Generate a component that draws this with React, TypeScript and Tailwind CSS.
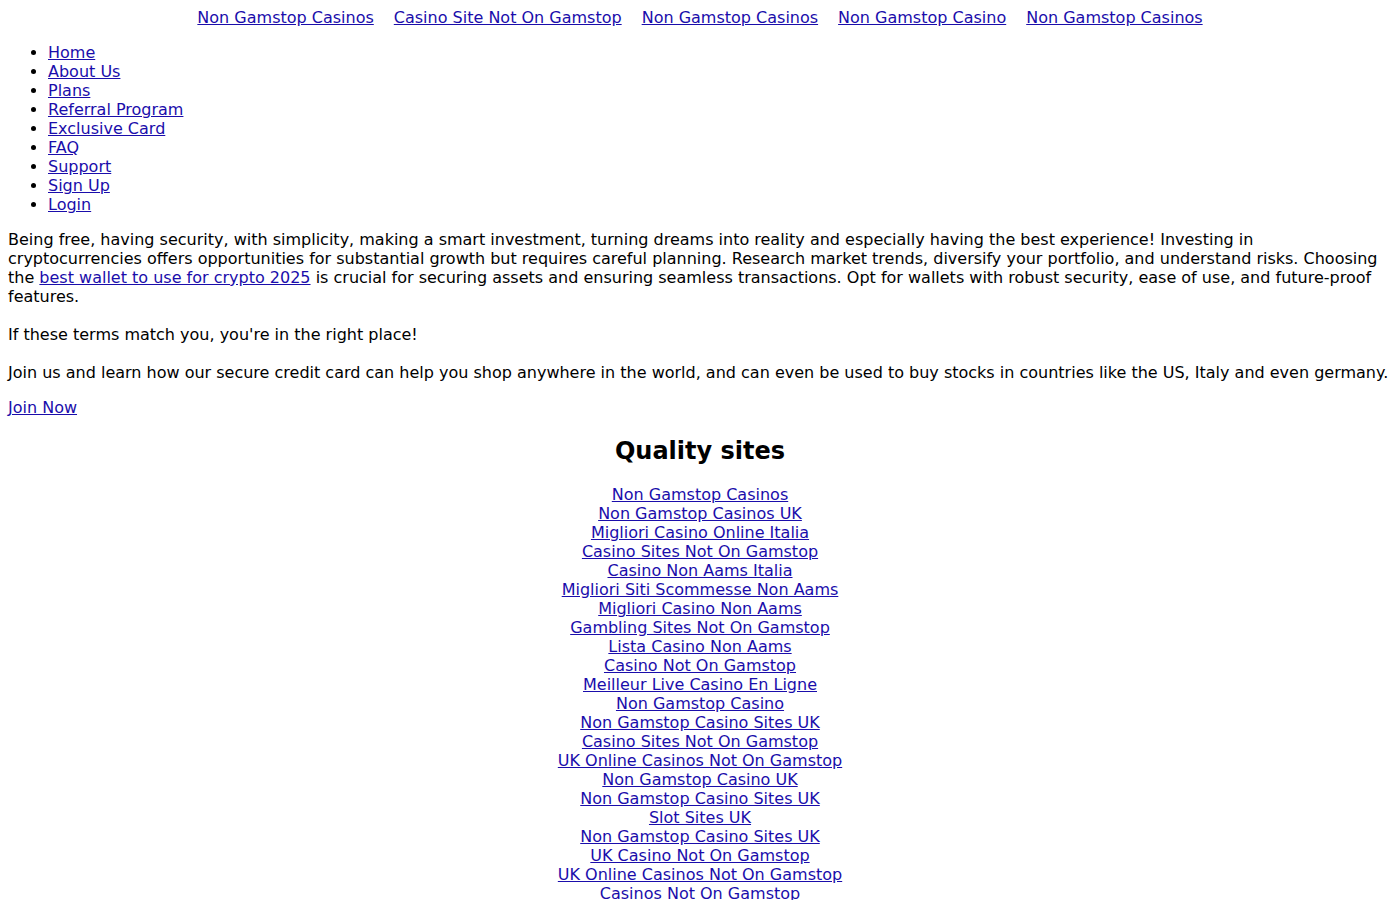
const topLinks = [
  'Non Gamstop Casinos',
  'Casino Site Not On Gamstop',
  'Non Gamstop Casinos',
  'Non Gamstop Casino',
  'Non Gamstop Casinos',
];

const navItems = ['Home', 'About Us', 'Plans', 'Referral Program', 'Exclusive Card', 'FAQ', 'Support', 'Sign Up', 'Login'];

const qualitySites = [
  'Non Gamstop Casinos',
  'Non Gamstop Casinos UK',
  'Migliori Casino Online Italia',
  'Casino Sites Not On Gamstop',
  'Casino Non Aams Italia',
  'Migliori Siti Scommesse Non Aams',
  'Migliori Casino Non Aams',
  'Gambling Sites Not On Gamstop',
  'Lista Casino Non Aams',
  'Casino Not On Gamstop',
  'Meilleur Live Casino En Ligne',
  'Non Gamstop Casino',
  'Non Gamstop Casino Sites UK',
  'Casino Sites Not On Gamstop',
  'UK Online Casinos Not On Gamstop',
  'Non Gamstop Casino UK',
  'Non Gamstop Casino Sites UK',
  'Slot Sites UK',
  'Non Gamstop Casino Sites UK',
  'UK Casino Not On Gamstop',
  'UK Online Casinos Not On Gamstop',
  'Casinos Not On Gamstop',
  'Non Gamstop Casinos UK',
  'Casino Non Aams',
];

const link = 'text-[#1a0dab] underline';

export default function App() {
  return (
    <div className="bg-white p-2 text-black text-base leading-[19px] font-['DejaVu_Sans',sans-serif]">
      {/* top link strip */}
      <div className="text-center">
        {topLinks.map((t, i) => (
          <a key={i} href="#" className={`${link} mx-[10px]`}>
            {t}
          </a>
        ))}
      </div>

      <ul className="my-4 list-disc pl-10">
        {navItems.map((n) => (
          <li key={n}>
            <a href="#" className={link}>
              {n}
            </a>
          </li>
        ))}
      </ul>

      <p className="my-4">
        Being free, having security, with simplicity, making a smart investment, turning dreams into reality and especially having the best experience! Investing in cryptocurrencies offers opportunities for substantial growth but requires careful planning. Research market trends, diversify your portfolio, and understand risks. Choosing the{' '}
        <a href="#" className={link}>
          best wallet to use for crypto 2025
        </a>{' '}
        is crucial for securing assets and ensuring seamless transactions. Opt for wallets with robust security, ease of use, and future-proof features.
        <br />
        <br />
        If these terms match you, you're in the right place!
        <br />
        <br />
        Join us and learn how our secure credit card can help you shop anywhere in the world, and can even be used to buy stocks in countries like the US, Italy and even germany.
      </p>

      <p className="my-4">
        <a href="#" className={link}>
          Join Now
        </a>
      </p>

      <div className="text-center">
        <h2 className="my-[19.92px] text-2xl font-bold leading-[28px]">Quality sites</h2>
        <ul className="list-none">
          {qualitySites.map((s, i) => (
            <li key={i}>
              <a href="#" className={link}>
                {s}
              </a>
            </li>
          ))}
        </ul>
      </div>
    </div>
  );
}
